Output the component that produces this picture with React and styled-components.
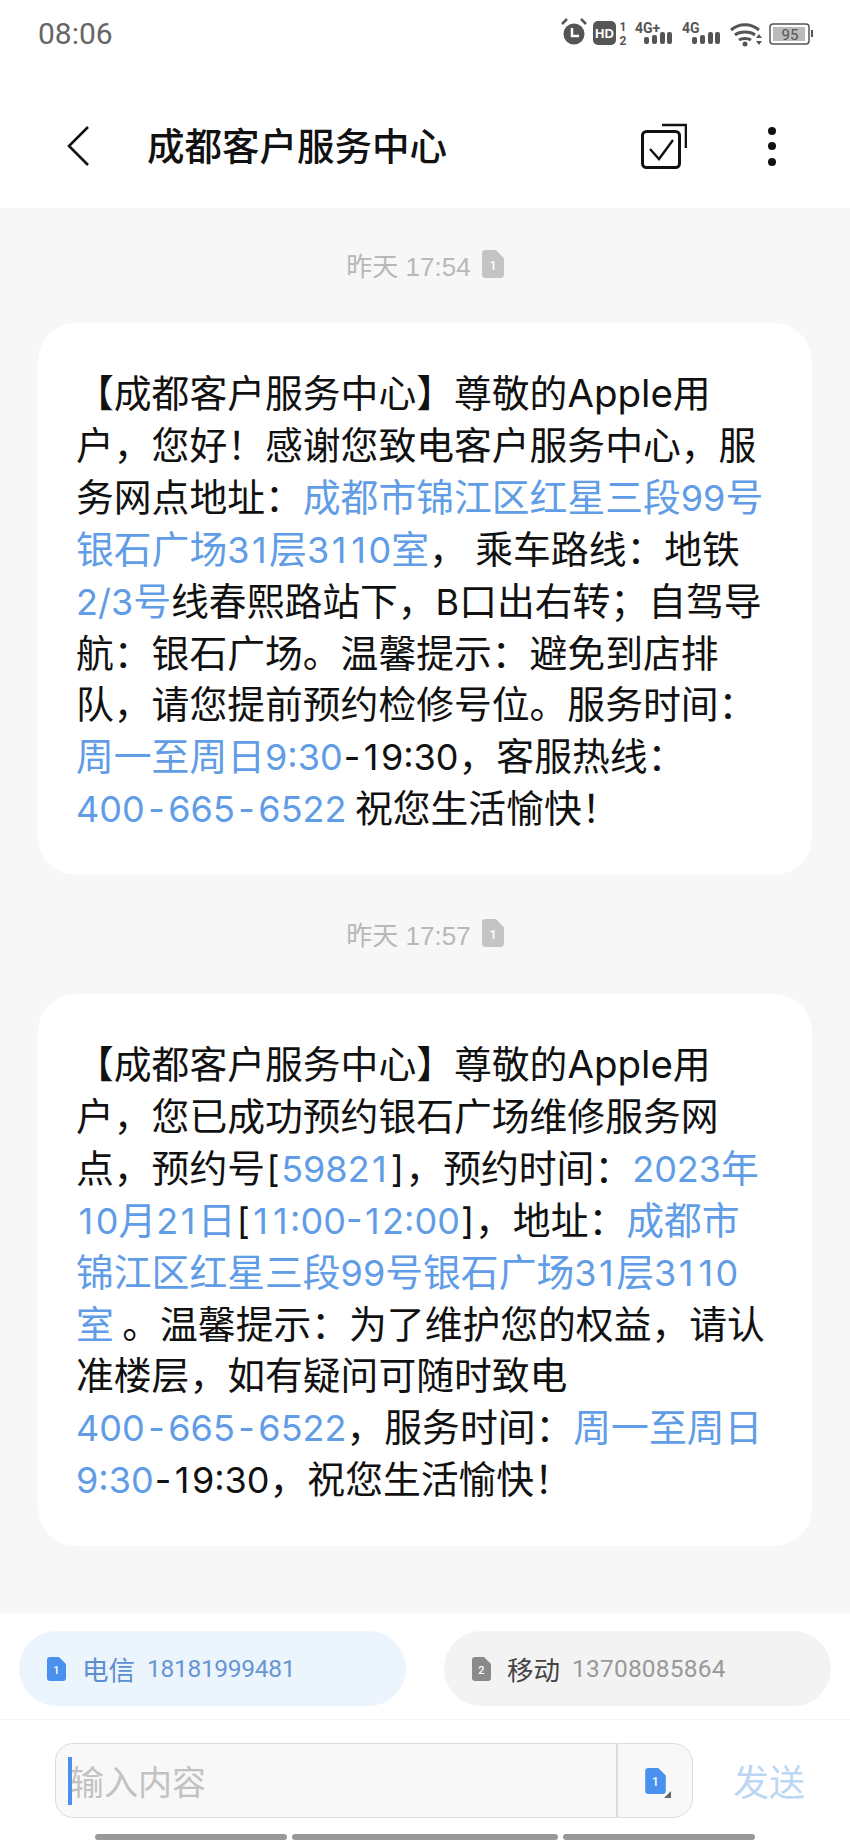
import React from 'react';
import styled, { createGlobalStyle } from 'styled-components';

const Global = createGlobalStyle`
  *, *::before, *::after { box-sizing: border-box; }
  html, body { margin: 0; padding: 0; background: #fff; }
  body { font-family: 'Noto Sans CJK SC', 'Noto Sans', sans-serif; }
`;

const Screen = styled.div`
  width: 850px;
  height: 1842px;
  display: flex;
  flex-direction: column;
  overflow: hidden;
  background: #f7f7f7;
`;

const StatusBar = styled.div`
  height: 66px;
  padding: 0 37px 0 38px;
  display: flex;
  align-items: center;
  justify-content: space-between;
  background: #fff;
`;

const Clock = styled.span`
  font-family: 'Roboto', sans-serif;
  font-size: 30px;
  color: #666;
`;

const Header = styled.div`
  height: 142px;
  padding: 18px 73px 0 66px;
  display: flex;
  align-items: center;
  background: #fff;
`;

const Title = styled.div`
  flex: 1;
  margin: 0 0 6px 57px;
  font-size: 37.5px;
  font-weight: 500;
  color: #111;
`;

const Actions = styled.div`
  display: flex;
  align-items: center;
  gap: 80px;
`;

const Messages = styled.div`
  flex: 1;
  padding: 0 38px;
  display: flex;
  flex-direction: column;
`;

const Stamp = styled.div`
  height: ${p => p.$h}px;
  padding-bottom: 3px;
  display: flex;
  align-items: center;
  justify-content: center;
  gap: 11px;
  font-family: 'Liberation Sans', 'Noto Sans CJK SC', sans-serif;
  font-size: 26px;
  color: #b8b8b8;
`;

const Bubble = styled.div`
  height: 552px;
  padding: 42px 30px 0 38px;
  border-radius: 38px;
  background: #fff;
  font-size: 37.8px;
  line-height: 51.9px;
  color: #111;
`;

const Line = styled.div`
  white-space: nowrap;
`;

const Hl = styled.span`
  color: #619ce6;
`;

const Lat = styled.span`
  font-family: 'Inter', sans-serif;
  font-size: ${p => p.$size || 36}px;
  line-height: 0;
`;

const One = styled.span`
  padding: 0 2.5px;
`;

const Sym = styled.span`
  font-family: 'Inter', sans-serif;
  font-size: 36px;
  line-height: 0;
  padding: 0 ${p => p.$pad}px;
`;

const SimBar = styled.div`
  flex-shrink: 0;
  height: 107px;
  padding: 18px 19px 0;
  display: flex;
  justify-content: space-between;
  background: #fff;
  border-bottom: 1px solid #f4f4f4;
`;

const SimPill = styled.div`
  width: 387px;
  height: 75px;
  padding-left: 28px;
  display: flex;
  align-items: center;
  border-radius: 38px;
  background: ${p => (p.$active ? '#ecf4fd' : '#f3f3f3')};
`;

const SimName = styled.span`
  margin-left: 16px;
  font-size: 26.5px;
  color: ${p => (p.$active ? '#5b8fd0' : '#444')};
`;

const SimNumber = styled.span`
  margin-left: 12px;
  font-family: 'Roboto', sans-serif;
  font-size: 24.5px;
  letter-spacing: ${p => (p.$active ? '-0.3px' : '0.2px')};
  color: ${p => (p.$active ? '#6796d2' : '#999')};
`;

const Composer = styled.div`
  flex-shrink: 0;
  height: 114px;
  padding: 23px 0 0 55px;
  display: flex;
  background: #fff;
`;

const InputBox = styled.div`
  width: 562px;
  height: 75px;
  display: flex;
  align-items: center;
  border: 1.5px solid #dcdcdc;
  border-radius: 18px 0 0 18px;
  background: #f8f8f8;
`;

const Caret = styled.span`
  width: 4px;
  height: 48px;
  margin-left: 12px;
  background: #4a90ee;
  flex-shrink: 0;
`;

const Placeholder = styled.span`
  margin-left: -2px;
  font-size: 34px;
  color: #c2c2c2;
`;

const SimSwitch = styled.div`
  position: relative;
  width: 76px;
  height: 75px;
  display: flex;
  align-items: center;
  justify-content: center;
  border: 1.5px solid #dcdcdc;
  border-radius: 0 20px 20px 0;
  background: #f8f8f8;
`;

const Corner = styled.span`
  position: absolute;
  right: 21px;
  bottom: 19px;
  width: 0;
  height: 0;
  border-left: 7px solid transparent;
  border-bottom: 7px solid #666;
`;

const Send = styled.span`
  margin-left: 40px;
  font-size: 36px;
  line-height: 75px;
  color: #bcd7f3;
`;

const NavBar = styled.div`
  flex-shrink: 0;
  height: 8px;
  padding-left: 95px;
  display: flex;
  gap: 5px;
  background: #fff;
`;

const NavPiece = styled.div`
  width: ${p => p.$w}px;
  height: 6px;
  background: #999;
  border-radius: 3px;
`;

function SimIcon({ n, color, w = 19, h = 24 }) {
  return (
    <svg width={w} height={h} viewBox="0 0 19 24">
      <path d="M3 0h9l7 7v14a3 3 0 0 1-3 3H3a3 3 0 0 1-3-3V3a3 3 0 0 1 3-3z" fill={color} />
      <text x="9.5" y="17" textAnchor="middle" fontSize="11" fontWeight="500" fontFamily="Roboto" fill="#fff">{n}</text>
    </svg>
  );
}

function Bars({ x }) {
  return (
    <g transform={`translate(${x} 0)`}>
      <rect x="0" y="24" width="5" height="7" rx="2" />
      <rect x="8" y="22" width="5" height="9" rx="2" />
      <rect x="16" y="19" width="5" height="12" rx="2" />
      <rect x="23" y="19" width="5" height="12" rx="2" />
    </g>
  );
}

function StatusGlyphs() {
  return (
    <svg width="255" height="40" viewBox="0 0 255 40">
      <g fill="#555">
        <circle cx="16" cy="21" r="10.5" />
        <path d="M4 11l5-5M28 11l-5-5" stroke="#555" strokeWidth="2.5" />
        <path d="M14 15v8h7" stroke="#fff" strokeWidth="2.5" fill="none" />
        <rect x="35" y="8" width="23" height="24" rx="5" />
        <text x="46.5" y="25" textAnchor="middle" fontSize="13" fontWeight="700" fontFamily="Liberation Sans" fill="#fff">HD</text>
        <text x="65" y="18" textAnchor="middle" fontSize="12" fontWeight="700" fontFamily="Roboto">1</text>
        <text x="65" y="32" textAnchor="middle" fontSize="12" fontWeight="700" fontFamily="Roboto">2</text>
        <text x="77" y="20" fontSize="14" fontWeight="700" fontFamily="Roboto">4G+</text>
        <Bars x={86} />
        <text x="124" y="20" fontSize="14" fontWeight="700" fontFamily="Roboto">4G</text>
        <Bars x={134} />
        <path d="M173 17c8-7 20-7 28 0M177 22c5-4 15-4 20 0M181 27c3-2 9-2 12 0" fill="none" stroke="#555" strokeWidth="3" />
        <circle cx="187" cy="31" r="2.5" />
        <path d="M198 25l3-4 3 4zM198 28l3 4 3-4z" />
        <rect x="212" y="11" width="39" height="20" rx="3" fill="none" stroke="#555" strokeWidth="1.5" />
        <rect x="215" y="14" width="32" height="14" fill="#bbb" />
        <rect x="253" y="17" width="2" height="7" />
        <text x="232" y="27" textAnchor="middle" fontSize="15" fontFamily="Roboto">95</text>
      </g>
    </svg>
  );
}

function BackIcon() {
  return (
    <svg width="24" height="40" viewBox="0 0 24 40">
      <path d="M22 1L3 20l19 19" fill="none" stroke="#111" strokeWidth="2.6" />
    </svg>
  );
}

function SelectIcon() {
  return (
    <svg width="46" height="46" viewBox="0 0 46 46">
      <rect x="1.5" y="8.5" width="37" height="36" rx="4" fill="none" stroke="#111" strokeWidth="3" />
      <path d="M21 2h24v23" fill="none" stroke="#111" strokeWidth="2.6" />
      <path d="M9 26l9 10 14-19" fill="none" stroke="#111" strokeWidth="2.4" />
    </svg>
  );
}

function MoreIcon() {
  return (
    <svg width="10" height="40" viewBox="0 0 10 40">
      <circle cx="5" cy="5" r="4" fill="#111" />
      <circle cx="5" cy="20" r="4" fill="#111" />
      <circle cx="5" cy="36" r="4" fill="#111" />
    </svg>
  );
}

// digit runs, the 1 in the reference font sits wider than Inter's
const Num = ({ children }) => (
  <Lat>{[...children].map((c, i) => (c === '1' ? <One key={i}>1</One> : c))}</Lat>
);

const Phone = () => (
  <Hl><Lat>400</Lat><Sym $pad={3.5}>-</Sym><Lat>665</Lat><Sym $pad={3.5}>-</Sym><Lat>6522</Lat></Hl>
);

const first = [
  <>【成都客户服务中心】尊敬的<Lat $size={38.5}>Apple</Lat>用</>,
  <>户，您好！感谢您致电客户服务中心，服</>,
  <>务网点地址：<Hl>成都市锦江区红星三段<Lat>99</Lat>号</Hl></>,
  <><Hl>银石广场<Num>31</Num>层<Num>3110</Num>室</Hl>， 乘车路线：地铁</>,
  <><Hl><Lat>2/3</Lat>号</Hl>线春熙路站下，<Lat>B</Lat>口出右转；自驾导</>,
  <>航：银石广场。温馨提示：避免到店排</>,
  <>队，请您提前预约检修号位。服务时间：</>,
  <><Hl>周一至周日<Lat>9:30</Lat></Hl><Sym $pad={1}>-</Sym><Num>19:30</Num>，客服热线：</>,
  <><Phone /> 祝您生活愉快！</>,
];

const second = [
  <>【成都客户服务中心】尊敬的<Lat $size={38.5}>Apple</Lat>用</>,
  <>户，您已成功预约银石广场维修服务网</>,
  <>点，预约号<Sym $pad={1.5}>[</Sym><Hl><Num>59821</Num></Hl><Sym $pad={1.5}>]</Sym>，预约时间：<Hl><Lat>2023</Lat>年</Hl></>,
  <><Hl><Num>10</Num>月<Num>21</Num>日</Hl><Sym $pad={1}>[</Sym><Hl><Num>11:00</Num><Sym $pad={0}>-</Sym><Num>12:00</Num></Hl><Sym $pad={1}>]</Sym>，地址：<Hl>成都市</Hl></>,
  <><Hl>锦江区红星三段<Lat>99</Lat>号银石广场<Num>31</Num>层<Num>3110</Num></Hl></>,
  <><Hl>室</Hl> 。温馨提示：为了维护您的权益，请认</>,
  <>准楼层，如有疑问可随时致电</>,
  <><Phone />，服务时间：<Hl>周一至周日</Hl></>,
  <><Hl><Lat>9:30</Lat></Hl><Sym $pad={1}>-</Sym><Num>19:30</Num>，祝您生活愉快！</>,
];

function App() {
  return (
    <Screen>
      <Global />
      <StatusBar>
        <Clock>08:06</Clock>
        <StatusGlyphs />
      </StatusBar>
      <Header>
        <BackIcon />
        <Title>成都客户服务中心</Title>
        <Actions>
          <SelectIcon />
          <MoreIcon />
        </Actions>
      </Header>
      <Messages>
        <Stamp $h={115}>昨天 17:54 <SimIcon n="1" color="#c4c4c4" w={22} h={28} /></Stamp>
        <Bubble>{first.map((l, i) => <Line key={i}>{l}</Line>)}</Bubble>
        <Stamp $h={119}>昨天 17:57 <SimIcon n="1" color="#c4c4c4" w={22} h={28} /></Stamp>
        <Bubble>{second.map((l, i) => <Line key={i}>{l}</Line>)}</Bubble>
      </Messages>
      <SimBar>
        <SimPill $active>
          <SimIcon n="1" color="#4a90ee" />
          <SimName $active>电信</SimName>
          <SimNumber $active>18181999481</SimNumber>
        </SimPill>
        <SimPill>
          <SimIcon n="2" color="#8a8a8a" />
          <SimName>移动</SimName>
          <SimNumber>13708085864</SimNumber>
        </SimPill>
      </SimBar>
      <Composer>
        <InputBox>
          <Caret />
          <Placeholder>输入内容</Placeholder>
        </InputBox>
        <SimSwitch>
          <SimIcon n="1" color="#4a90ee" w={21} h={26} />
          <Corner />
        </SimSwitch>
        <Send>发送</Send>
      </Composer>
      <NavBar>
        <NavPiece $w={192} />
        <NavPiece $w={266} />
        <NavPiece $w={192} />
      </NavBar>
    </Screen>
  );
}

export default App;
